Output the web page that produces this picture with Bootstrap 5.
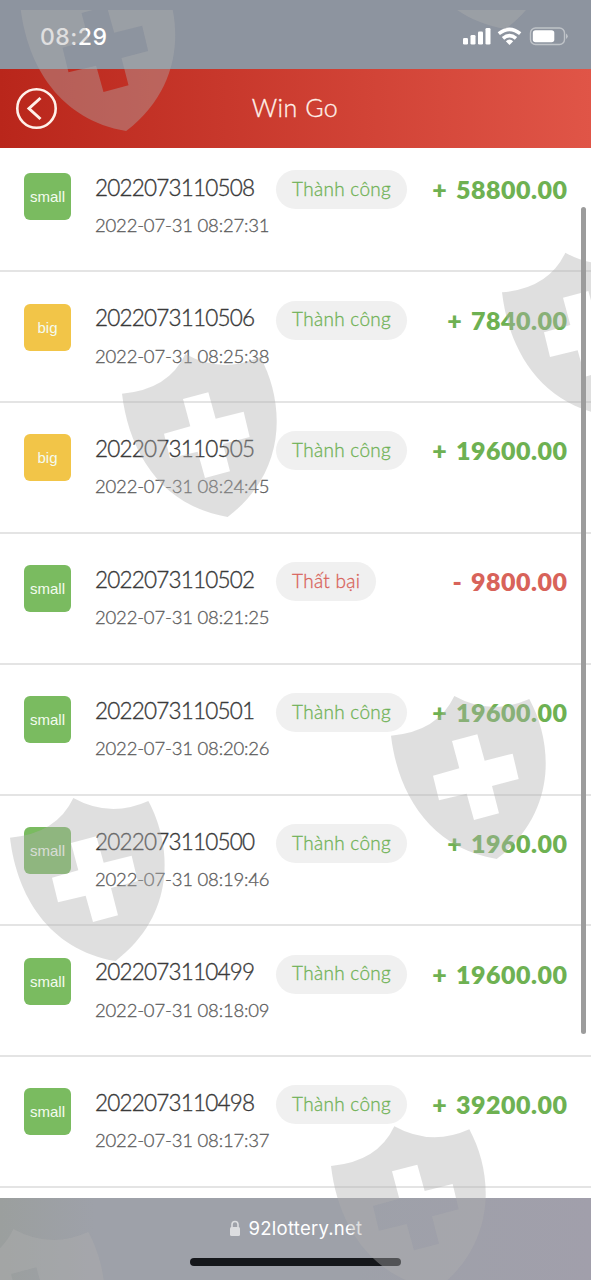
<!DOCTYPE html>
<html lang="vi">
<head>
  <meta charset="UTF-8" />
  <meta name="viewport" content="width=device-width, initial-scale=1" />
  <title>Win Go</title>
  <link href="https://cdn.jsdelivr.net/npm/bootstrap@5.3.3/dist/css/bootstrap.min.css" rel="stylesheet" />
  <style>
    body {
      font-family: Lato, "Noto Sans", sans-serif;
      background-color: #fff;
    }
    .screen {
      width: 591px;
      height: 1280px;
    }
    .status-bar {
      height: 69px;
      padding: 5px 23px 0 40px;
      background-color: #8d949f;
      font-family: Inter, sans-serif;
    }
    .clock {
      font-size: 23px;
      font-weight: 500;
      letter-spacing: .5px;
    }
    .title-bar {
      height: 79px;
      padding: 0 16px;
      background: linear-gradient(90deg, #b9261b, #e05547);
    }
    .title-bar h1 {
      font-size: 25px;
      font-weight: 300;
      letter-spacing: .5px;
      color: #fff1ea;
      padding-bottom: 3px;
      margin-right: 42px;
      -webkit-text-stroke: .3px;
    }
    .back-icon {
      width: 41px;
      height: 41px;
    }
    .bet-row {
      height: 130.8px;
      padding: 31.3px 24px 0;
      border-bottom: 2px solid #e4e4e4;
    }
    .bet-row:first-child {
      height: 124.4px;
      padding-top: 25px;
    }
    .bet-pick {
      width: 47px;
      height: 47px;
      border-radius: 6px;
      color: #f4fbef;
      font: 15px "Liberation Sans", sans-serif;
      background-color: #7abb60;
    }
    .bet-pick.big {
      background-color: #f2c548;
    }
    .bet-info {
      margin: -3px 0 0 24px;
    }
    .issue {
      width: 181px;
      font-size: 22.5px;
      font-weight: 300;
      letter-spacing: -.8px;
      color: #3a3a3a;
      padding-bottom: 4px;
      -webkit-text-stroke: .35px;
    }
    .bet-time {
      font-size: 18.5px;
      font-weight: 300;
      line-height: 24px;
      letter-spacing: -.18px;
      color: #5c5c5c;
      margin-top: 4px;
      -webkit-text-stroke: .3px;
    }
    .state {
      height: 39px;
      padding: 0 16px 1px;
      background-color: #f0f0f0;
      font-size: 19px;
      font-weight: 300;
      letter-spacing: .3px;
      color: #70b257;
      -webkit-text-stroke: .3px;
    }
    .amount {
      font-size: 25px;
      line-height: 32px;
      font-weight: 800;
      letter-spacing: .5px;
      word-spacing: 2.5px;
      margin-right: -.5px;
      color: #6eb152;
    }
    .lost .state,
    .lost .amount {
      color: #d8635a;
    }
    .url-bar {
      height: 82px;
      padding-top: 19px;
      background: linear-gradient(90deg, #9b9f9e, #9ea1a9 16%, #9ea1a9 60%, #a19fab);
      font-family: Inter, sans-serif;
      font-size: 18.5px;
      letter-spacing: .25px;
    }
    .home-line {
      width: 211px;
      height: 8px;
      background-color: #15171b;
      margin-top: 18px;
    }
    .scroll-thumb {
      left: 581px;
      top: 207px;
      width: 5px;
      height: 827px;
      background-color: #9c9c9c;
    }
  </style>
</head>
<body>
  <div class="screen position-relative overflow-hidden d-flex flex-column">
    <div class="status-bar d-flex align-items-center justify-content-between text-white flex-shrink-0">
      <span class="clock">08:29</span>
      <svg width="106" height="20" viewBox="0 0 106 20" fill="#fff">
        <rect x="1" y="11" width="5" height="6.500" rx="1.300" />
        <rect x="8.500" y="8" width="5" height="9.500" rx="1.300" />
        <rect x="16" y="4.500" width="5" height="13" rx="1.300" />
        <rect x="23.500" y="1" width="5" height="16.500" rx="1.300" />
        <g fill="none" stroke="#fff" stroke-width="3.600">
          <path d="M36.800 6.600Q47.500 -2 58.200 6.600" />
          <path d="M41 11.400Q47.500 5.800 54 11.400" />
        </g>
        <path d="M43.800 14.200Q47.500 11 51.200 14.200L47.500 18Z" />
        <rect x="68.500" y="1" width="34" height="16.500" rx="5" fill="none" stroke="#bfc3c8" stroke-width="1.400" />
        <rect x="70.800" y="3.300" width="21.500" height="12" rx="2.800" />
        <path d="M104 6.500Q107.500 9.200 104 12Z" fill="#bfc3c8" />
      </svg>
    </div>

    <div class="title-bar d-flex align-items-center flex-shrink-0">
      <svg class="back-icon flex-shrink-0" viewBox="0 0 41 41" fill="none" stroke="#fff1ea">
        <circle cx="20.500" cy="20.500" r="19.200" stroke-width="2.600" />
        <path d="M24.500 10L13 20.500L24.500 31" stroke-width="3" />
      </svg>
      <h1 class="flex-grow-1 text-center mb-0">Win Go</h1>
    </div>

    <div id="betList" class="flex-grow-1 overflow-hidden"></div>

    <div class="url-bar text-white d-flex flex-column align-items-center flex-shrink-0">
      <div class="d-flex align-items-center lh-sm">
        <svg class="me-2" width="12" height="17" viewBox="0 0 12 17">
          <rect x="1" y="7" width="10" height="9" rx="1.500" fill="#dcdde0" />
          <path d="M3 8V4.500a3 3 0 0 1 6 0V8" fill="none" stroke="#dcdde0" stroke-width="1.600" />
        </svg>
        <span>92lottery.net</span>
      </div>
      <div class="home-line rounded-pill"></div>
    </div>

    <!-- shield marks lie over the whole screen -->
    <svg class="position-absolute top-0 start-0 pe-none" width="591" height="1280" viewBox="0 0 591 1280">
      <defs>
        <path id="shield" transform="scale(.33333)" fill-rule="evenodd" d="M0 119Q140 107 190 0Q300 61 415 9C488 145 498 350 317 489C115 455 20 290 0 119Z
          M183 135L259 115L281 194L365 173L383 249L303 270L324 352L249 372L227 293L144 313L126 239L205 217Z" />
        <clipPath id="belowTop"><rect y="10" width="591" height="1270" /></clipPath>
      </defs>
      <g fill="#afafaf" fill-opacity=".4" clip-path="url(#belowTop)">
        <use href="#shield" x="20.500" y="-32" />
        <use href="#shield" x="400" y="-134" />
        <use href="#shield" x="502" y="252.700" />
        <use href="#shield" x="122" y="354" />
        <use href="#shield" x="391" y="696" />
        <use href="#shield" x="10" y="798" />
        <use href="#shield" x="331" y="1126.300" />
        <use href="#shield" x="-50" y="1229" />
      </g>
    </svg>
    <div class="scroll-thumb position-absolute rounded-pill"></div>
  </div>

  <script>
    const bets = [
      ["small", "2022073110508", "2022-07-31 08:27:31", "+ 58800.00"],
      ["big", "2022073110506", "2022-07-31 08:25:38", "+ 7840.00"],
      ["big", "2022073110505", "2022-07-31 08:24:45", "+ 19600.00"],
      ["small", "2022073110502", "2022-07-31 08:21:25", "- 9800.00"],
      ["small", "2022073110501", "2022-07-31 08:20:26", "+ 19600.00"],
      ["small", "2022073110500", "2022-07-31 08:19:46", "+ 1960.00"],
      ["small", "2022073110499", "2022-07-31 08:18:09", "+ 19600.00"],
      ["small", "2022073110498", "2022-07-31 08:17:37", "+ 39200.00"]
    ];
    const betList = document.getElementById("betList");

    for (const [pick, issue, time, amount] of bets) {
      const lost = amount.startsWith("-");
      const row = `
        <div class="bet-row d-flex align-items-start ${lost ? "lost" : ""}">
          <div class="bet-pick ${pick} d-flex align-items-center justify-content-center flex-shrink-0">${pick}</div>
          <div class="bet-info text-nowrap">
            <div class="d-flex align-items-center">
              <span class="issue">${issue}</span>
              <span class="state rounded-pill d-flex align-items-center">${lost ? "Thất bại" : "Thành công"}</span>
            </div>
            <div class="bet-time">${time}</div>
          </div>
          <div class="amount ms-auto text-nowrap">${amount}</div>
        </div>`;
      betList.insertAdjacentHTML("beforeend", row);
    }
  </script>
</body>
</html>
